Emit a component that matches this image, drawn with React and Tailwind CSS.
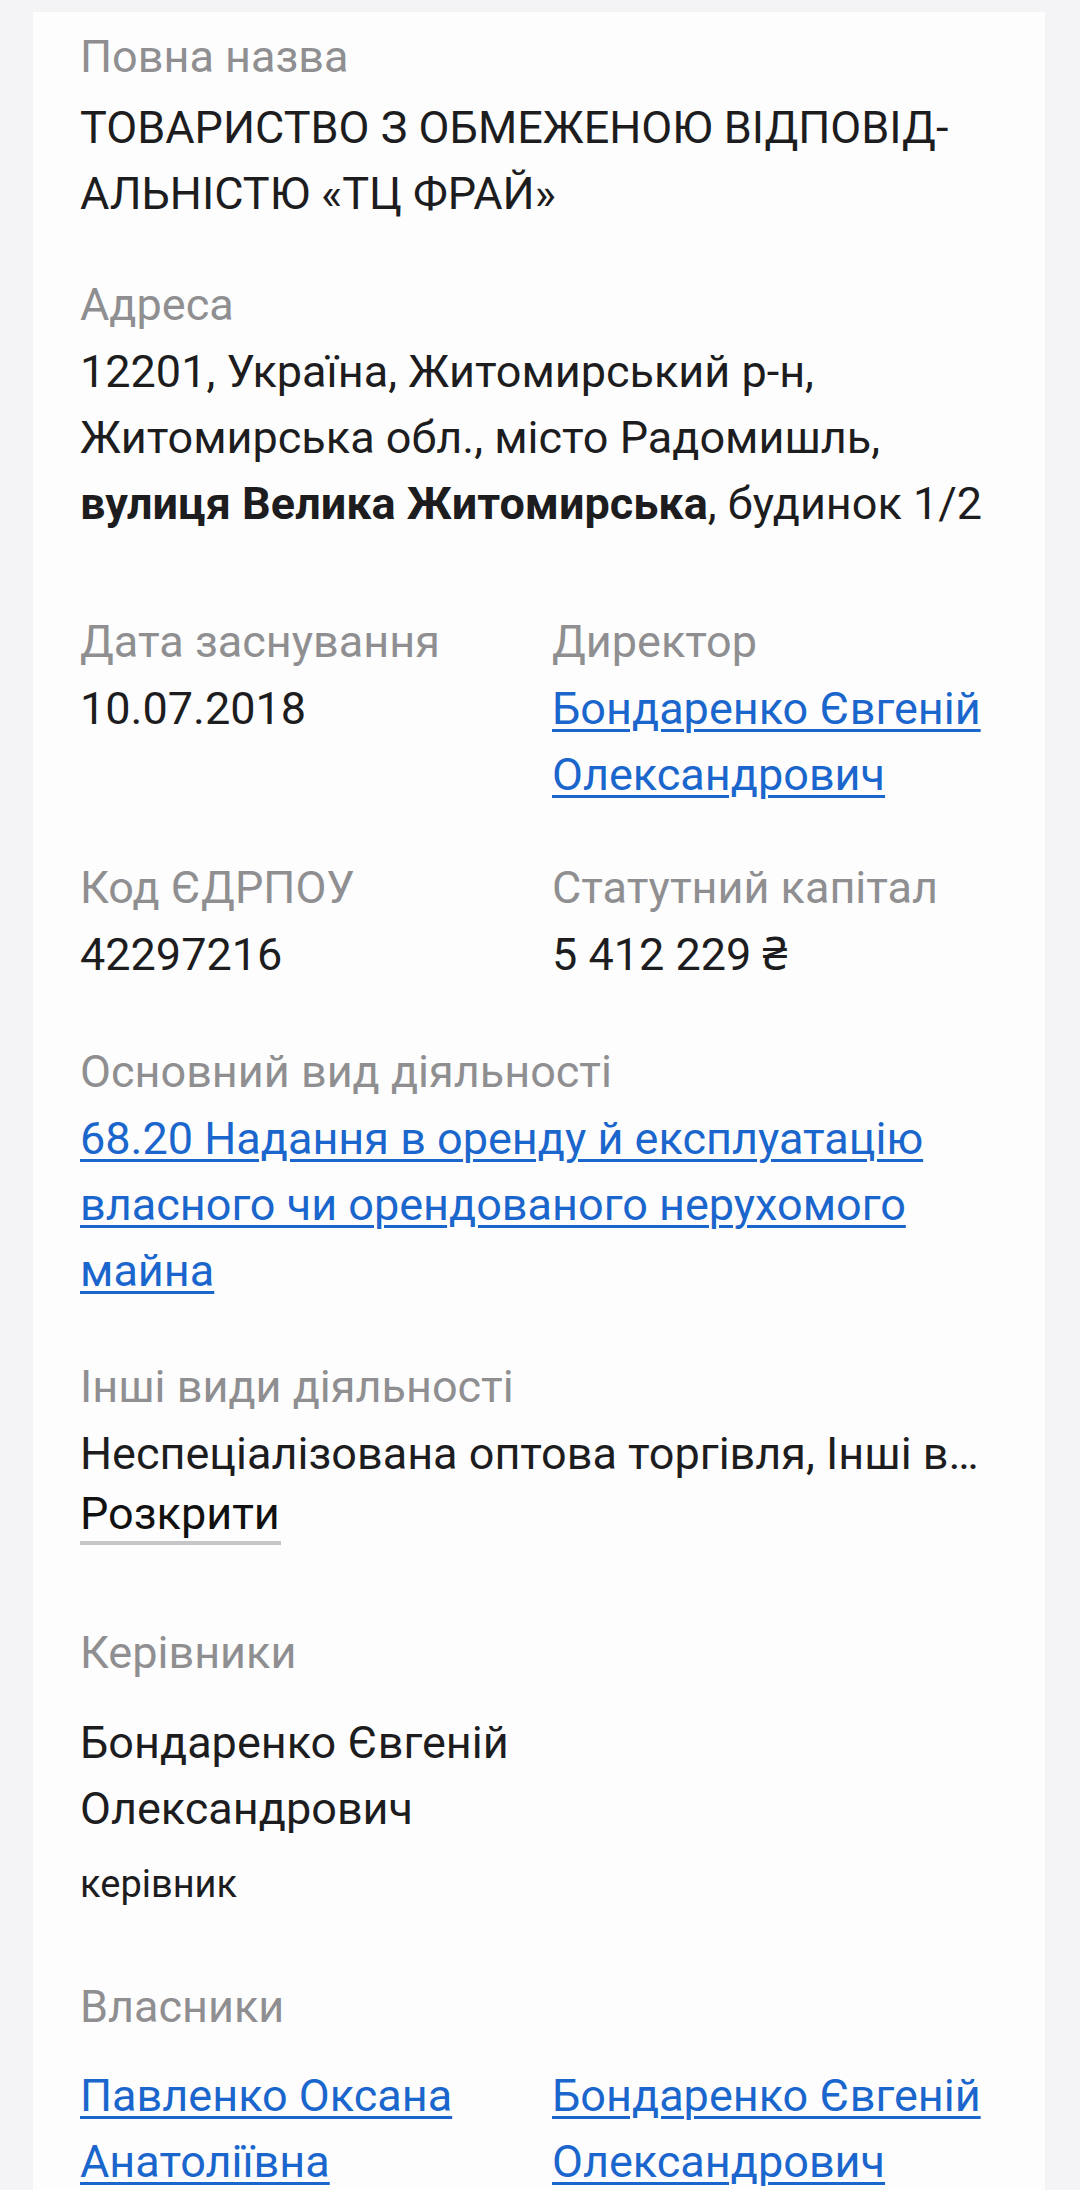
import React from "react";

const font = { fontFamily: "Roboto, 'Noto Sans', Arial, sans-serif" };

function Label({ children, className = "" }) {
  return (
    <div className={"text-[45px] leading-[68px] text-[#8f8f91] " + className}>
      {children}
    </div>
  );
}

function Value({ children, className = "" }) {
  return (
    <div className={"text-[45px] leading-[66px] text-[#1d1d1f] " + className}>
      {children}
    </div>
  );
}

function Link({ children }) {
  return (
    <span className="text-[#1a66cc] underline decoration-[3px] underline-offset-[5px]">
      {children}
    </span>
  );
}

export default function App() {
  return (
    <div
      className="w-[1080px] h-[2190px] overflow-hidden bg-[#f4f4f6] pt-[12px] pl-[33px] pr-[35px]"
      style={font}
    >
      <div className="bg-[#fdfdfd] h-full pl-[47px] pr-[20px] pt-[11px]">
        <Label>Повна назва</Label>
        <Value className="mt-[4px]">
          ТОВАРИСТВО З ОБМЕЖЕНОЮ ВІДПОВІД-
          <br />
          АЛЬНІСТЮ «ТЦ ФРАЙ»
        </Value>

        <Label className="mt-[44px]">Адреса</Label>
        <Value>
          12201, Україна, Житомирський р-н,
          <br />
          Житомирська обл., місто Радомишль,
          <br />
          <span className="font-bold">вулиця Велика Житомирська</span>, будинок 1/2
        </Value>

        <div className="grid grid-cols-[472px_1fr] mt-[71px]">
          <div>
            <Label>Дата заснування</Label>
            <Value>10.07.2018</Value>
          </div>
          <div>
            <Label>Директор</Label>
            <Value>
              <Link>Бондаренко Євгеній</Link>
              <br />
              <Link>Олександрович</Link>
            </Value>
          </div>
        </div>

        <div className="grid grid-cols-[472px_1fr] mt-[46px]">
          <div>
            <Label>Код ЄДРПОУ</Label>
            <Value>42297216</Value>
          </div>
          <div>
            <Label>Статутний капітал</Label>
            <Value>5 412 229 ₴</Value>
          </div>
        </div>

        <Label className="mt-[50px]">Основний вид діяльності</Label>
        <Value>
          <Link>68.20 Надання в оренду й експлуатацію</Link>
          <br />
          <Link>власного чи орендованого нерухомого</Link>
          <br />
          <Link>майна</Link>
        </Value>

        <Label className="mt-[49px]">Інші види діяльності</Label>
        <Value className="whitespace-nowrap">Неспеціалізована оптова торгівля, Інші в…</Value>
        <div>
          <span className="inline-block text-[45px] leading-[54px] text-[#111] border-b-[4px] border-[#c6c6c8] pr-[1px]">
            Розкрити
          </span>
        </div>

        <Label className="mt-[74px]">Керівники</Label>
        <Value className="mt-[23px]">
          Бондаренко Євгеній
          <br />
          Олександрович
        </Value>
        <div className="mt-[17px] text-[38px] leading-[50px] text-[#1d1d1f]">керівник</div>

        <Label className="mt-[64px]">Власники</Label>
        <div className="grid grid-cols-[472px_1fr] mt-[22px]">
          <Value>
            <Link>Павленко Оксана</Link>
            <br />
            <Link>Анатоліївна</Link>
          </Value>
          <Value>
            <Link>Бондаренко Євгеній</Link>
            <br />
            <Link>Олександрович</Link>
          </Value>
        </div>
      </div>
    </div>
  );
}
